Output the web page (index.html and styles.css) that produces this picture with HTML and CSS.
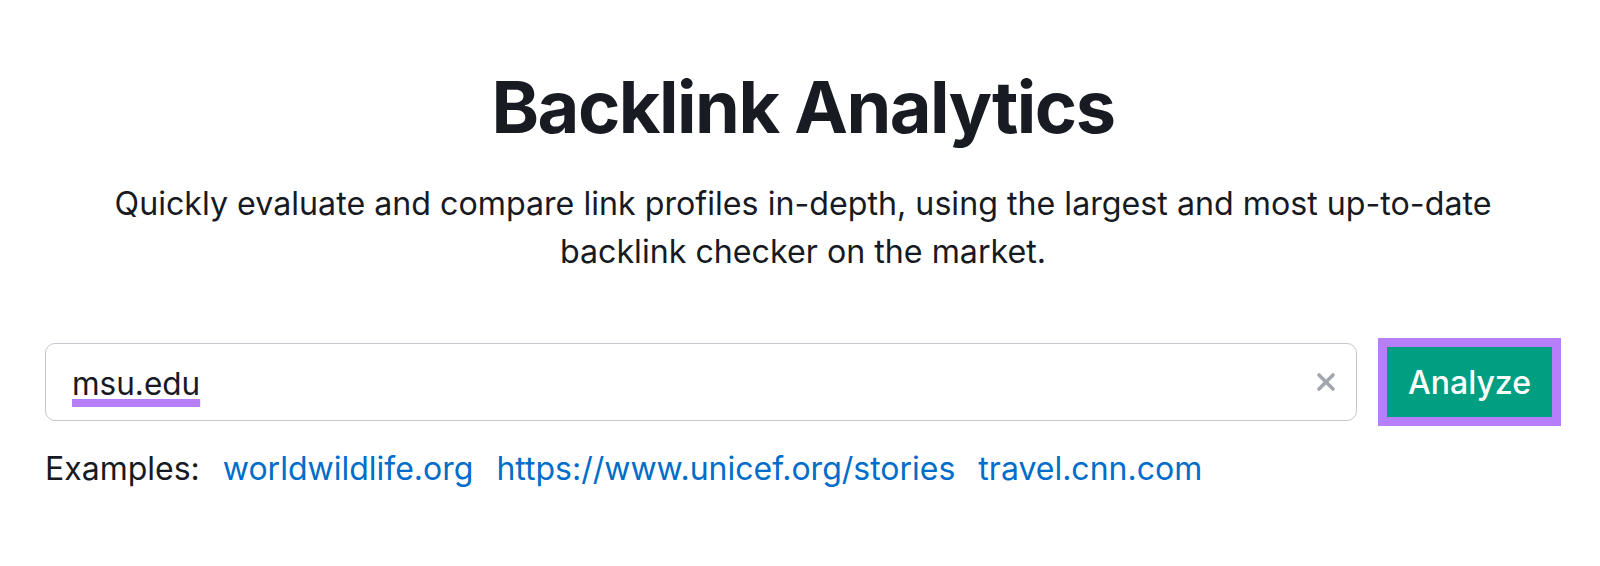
FILE: index.html
```html
<!DOCTYPE html>
<html lang="en">
<head>
<meta charset="utf-8">
<title>Backlink Analytics</title>
<link rel="stylesheet" href="styles.css">
</head>
<body>
<main class="page">
  <h1 class="title">Backlink Analytics</h1>
  <p class="subtitle">Quickly evaluate and compare link profiles in-depth, using the largest and most up-to-date<br>backlink checker on the market.</p>
  <div class="search-row">
    <div class="search-box">
      <span class="query">msu.edu</span>
      <svg class="clear" width="20" height="20" viewBox="0 0 20 20" aria-hidden="true">
        <path d="M3 3 L17 17 M17 3 L3 17" stroke="#a4a6af" stroke-width="3.6" stroke-linecap="round"/>
      </svg>
    </div>
    <div class="btn-frame">
      <button class="analyze">Analyze</button>
    </div>
  </div>
  <div class="examples">
    <span class="ex-label">Examples:</span>
    <a class="ex-link" href="#">worldwildlife.org</a>
    <a class="ex-link" href="#">https://www.unicef.org/stories</a>
    <a class="ex-link" href="#">travel.cnn.com</a>
  </div>
</main>
</body>
</html>
```

FILE: styles.css
```css
html, body {
  margin: 0;
  padding: 0;
  background: #ffffff;
}

body {
  font-family: Inter, "Noto Sans", "Liberation Sans", sans-serif;
  color: #171a22;
}

.page {
  width: 1600px;
  height: 566px;
  box-sizing: border-box;
  padding: 63px 39px 0 45px;
  display: flex;
  flex-direction: column;
}

.title {
  margin: 0;
  font-size: 72px;
  line-height: 88px;
  font-weight: 700;
  color: #191b23;
  text-align: center;
  letter-spacing: -1.5px;
}

.subtitle {
  margin: 29px 0 0;
  font-size: 32.2px;
  line-height: 48px;
  font-weight: 400;
  text-align: center;
  color: #171a22;
}

.search-row {
  margin-top: 62px;
  display: flex;
  align-items: center;
  gap: 21px;
}

.search-box {
  flex: 1;
  height: 78px;
  box-sizing: border-box;
  border: 1.5px solid #c5c7cf;
  border-radius: 10px;
  display: flex;
  align-items: center;
  justify-content: space-between;
  padding: 0 20px 0 26px;
}

.query {
  font-size: 31.5px;
  line-height: 36px;
  color: #171a22;
  text-decoration: underline;
  text-decoration-color: #b77ef9;
  text-decoration-thickness: 8px;
  text-underline-offset: 4px;
  text-decoration-skip-ink: none;
  position: relative;
  top: 2px;
}

.clear {
  display: block;
}

.btn-frame {
  background: #b77ef9;
  padding: 9px;
  display: flex;
}

.analyze {
  width: 165px;
  height: 70px;
  border: 0;
  margin: 0;
  padding: 0;
  background: #009f81;
  color: #ffffff;
  font-family: Inter, "Noto Sans", "Liberation Sans", sans-serif;
  font-size: 32px;
  font-weight: 500;
  cursor: pointer;
}

.examples {
  margin-top: 23px;
  display: flex;
  align-items: baseline;
  gap: 23px;
  font-size: 32px;
  line-height: 40px;
}

.ex-label {
  color: #171a22;
}

.ex-link {
  color: #006dca;
  text-decoration: none;
}
```
